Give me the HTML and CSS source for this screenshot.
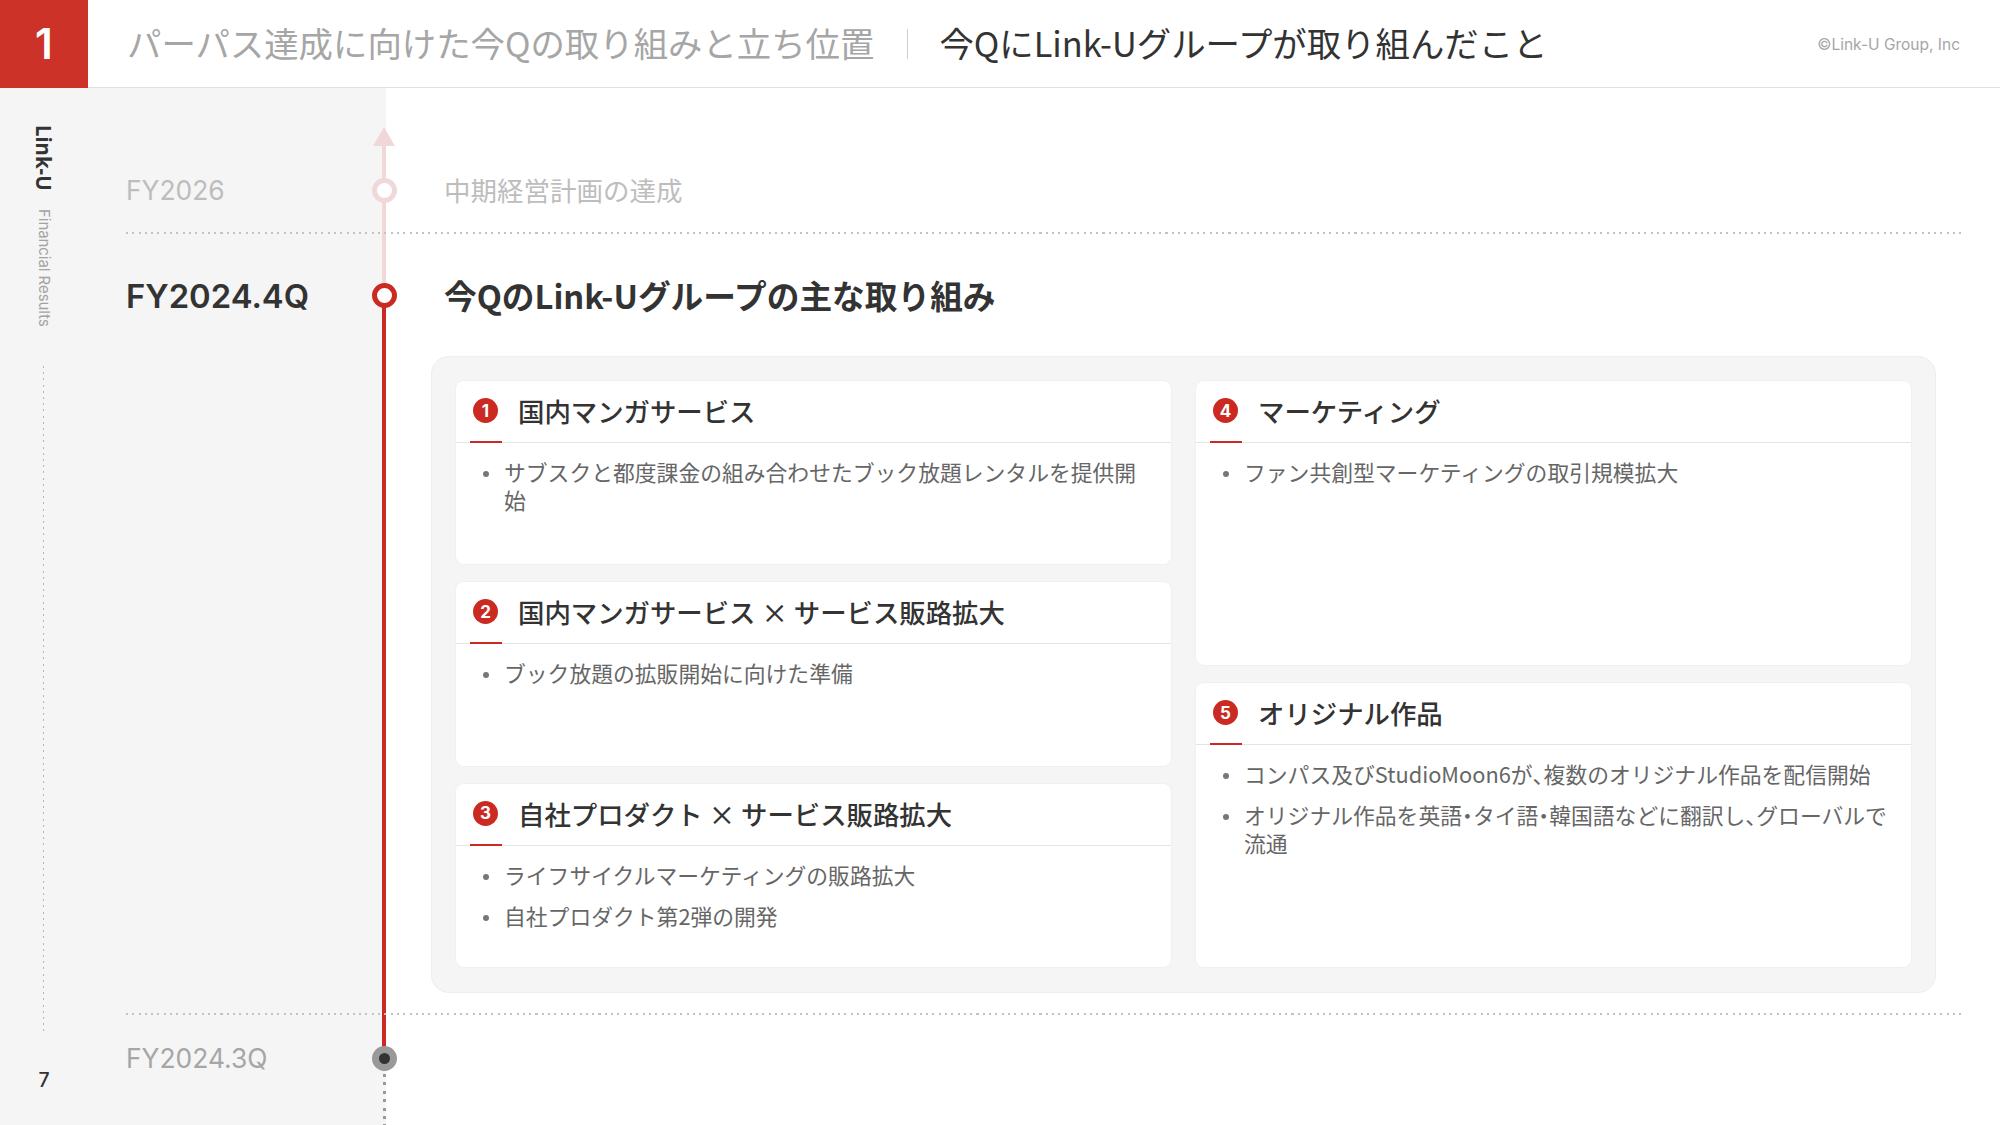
FILE: index.html
```html
<!DOCTYPE html>
<html lang="ja">
<head>
<meta charset="utf-8">
<title>今QにLink-Uグループが取り組んだこと</title>
<link rel="stylesheet" href="styles.css">
</head>
<body>
<div class="slide">
  <header class="top">
    <div class="chapter">1</div>
    <div class="crumb">パーパス達成に向けた今Qの取り組みと立ち位置</div>
    <div class="sep"></div>
    <h1 class="title">今QにLink-Uグループが取り組んだこと</h1>
    <div class="copy">©Link-U Group, Inc</div>
  </header>
  <div class="main">
    <aside class="rail">
      <div class="brand">Link-U</div>
      <div class="sub">Financial Results</div>
      <div class="rail-dots"></div>
      <div class="page">7</div>
    </aside>
    <div class="timeline">
      <div class="line-faded"></div>
      <div class="arrow"></div>
      <div class="line-red"></div>
      <div class="line-dots"></div>

      <section class="row row-future">
        <div class="year">FY2026</div>
        <div class="marker"><span class="dot dot-future"></span></div>
        <div class="row-text">中期経営計画の達成</div>
      </section>

      <section class="row-now">
        <div class="row row-current">
          <div class="year">FY2024.4Q</div>
          <div class="marker"><span class="dot dot-current"></span></div>
          <h2 class="row-text">今QのLink-Uグループの主な取り組み</h2>
        </div>
        <div class="panel">
          <div class="col">
            <article class="card">
              <div class="card-head"><span class="num">1</span><h3>国内マンガサービス</h3></div>
              <ul><li>サブスクと都度課金の組み合わせたブック放題レンタルを提供開始</li></ul>
            </article>
            <article class="card">
              <div class="card-head"><span class="num">2</span><h3>国内マンガサービス × サービス販路拡大</h3></div>
              <ul><li>ブック放題の拡販開始に向けた準備</li></ul>
            </article>
            <article class="card">
              <div class="card-head"><span class="num">3</span><h3>自社プロダクト × サービス販路拡大</h3></div>
              <ul><li>ライフサイクルマーケティングの販路拡大</li><li>自社プロダクト第2弾の開発</li></ul>
            </article>
          </div>
          <div class="col">
            <article class="card card-m">
              <div class="card-head"><span class="num">4</span><h3>マーケティング</h3></div>
              <ul><li>ファン共創型マーケティングの取引規模拡大</li></ul>
            </article>
            <article class="card card-o">
              <div class="card-head"><span class="num">5</span><h3>オリジナル作品</h3></div>
              <ul><li>コンパス及びStudioMoon6が<span class="tight">、</span>複数のオリジナル作品を配信開始</li><li>オリジナル作品を英語<span class="tight">・</span>タイ語<span class="tight">・</span>韓国語などに翻訳し<span class="tight">、</span>グローバルで<span>流通</span></li></ul>
            </article>
          </div>
        </div>
      </section>

      <section class="row row-past">
        <div class="year">FY2024.3Q</div>
        <div class="marker"><span class="dot dot-past"></span></div>
      </section>
    </div>
  </div>
</div>
</body>
</html>
```
FILE: styles.css
```css
* { box-sizing: border-box; }
html, body { margin: 0; padding: 0; }
body {
  width: 2000px; height: 1125px; overflow: hidden; background: #fff; color: #333;
  font-family: "Noto Sans CJK JP", "Noto Sans", sans-serif;
}
h1, h2, h3, ul { margin: 0; padding: 0; }
.tight { display: inline-block; font-feature-settings: "palt"; }
.slide { display: flex; flex-direction: column; width: 2000px; height: 1125px; }

.top { display: flex; align-items: center; height: 88px; flex: none; border-bottom: 1px solid #e0e0e0; }
.chapter {
  width: 88px; height: 88px; flex: none; background: #cd3229; color: #fff;
  display: flex; align-items: center; justify-content: center;
  font: 600 42px "Inter", sans-serif;
}
.crumb { margin-left: 39px; font-size: 34.4px; color: #a6a6a6; line-height: 84px; height: 88px; }
.sep { width: 1px; height: 30px; background: #cfcfcf; margin: 0 31px 0 33px; }
.title { font-size: 34.4px; font-weight: 400; color: #333; line-height: 84px; height: 88px; }
.copy { margin-left: auto; margin-right: 40px; margin-top: 2px; font: 400 15.5px "Inter", sans-serif; color: #a6a6a6; }

.main {
  display: flex; flex: 1; min-height: 0;
  background: linear-gradient(to right, #f5f5f5 386px, #fff 386px);
}
.rail { width: 88px; flex: none; display: flex; flex-direction: column; align-items: center; padding-top: 37px; }
.brand { writing-mode: vertical-rl; font: 700 20.5px/24px "Noto Sans", sans-serif; color: #333; }
.sub { writing-mode: vertical-rl; margin-top: 18px; font: 400 14.9px/18px "Inter", sans-serif; color: #a3a3a3; }
.rail-dots {
  margin: 40px 2px 0 0; height: 665px; width: 1px; flex: none;
  background: repeating-linear-gradient(to bottom, #b5b5b5 0 2px, transparent 2px 6.2px);
}
.page { margin-top: 37px; font: 500 19.5px "Inter", sans-serif; color: #333; }

.timeline { position: relative; flex: 1; padding: 0 38px; }
.line-faded { position: absolute; left: 294px; top: 50px; width: 4px; height: 160px; background: #f1d8d8; }
.arrow {
  position: absolute; left: 285px; top: 39px; width: 22px; height: 19px;
  background: #f1d8d8; clip-path: polygon(50% 0, 100% 100%, 0 100%);
}
.line-red { position: absolute; left: 294px; top: 210px; width: 4px; height: 760px; background: #cb2a22; }
.line-dots {
  position: absolute; left: 295px; top: 986px; width: 3px; height: 51px;
  background: repeating-linear-gradient(to bottom, #999 0 3px, transparent 3px 8.4px);
}

.row { position: relative; display: flex; align-items: center; }
.year { width: 231px; flex: none; font-family: "Inter", sans-serif; font-size: 26.4px; }
.marker { width: 65px; flex: none; display: flex; justify-content: center; margin-left: -5px; position: relative; }
.dot { display: block; width: 25px; height: 25px; border-radius: 50%; background: #fff; }
.row-text { margin-left: 27px; margin-bottom: 2px; }

.row-future::after, .row-now::after {
  content: ""; position: absolute; left: 0; right: 0; bottom: 0; height: 2px;
  background: repeating-linear-gradient(to right, #c2c2c2 0 2px, transparent 2px 6.3px);
}
.row-future { height: 146px; padding-top: 58px; }
.row-future .year { color: #bdbdbd; }
.row-future .row-text { font-size: 26.5px; color: #bdbdbd; }
.dot-future { border: 5px solid #f1d8d8; }

.row-now { position: relative; padding-bottom: 22px; }
.row-current { height: 122px; padding-top: 1px; }
.row-current .year { font-weight: 600; font-size: 32.8px; color: #333; }
.row-current .row-text { font-size: 32.7px; font-weight: 600; color: #333; }
.dot-current { border: 5px solid #cb2a22; }

.panel {
  display: grid; grid-template-columns: 1fr 1fr; gap: 25px;
  margin-left: 305px; margin-right: 26px; padding: 24px 24px 25px;
  height: 637px; background: #f5f5f5; border: 1px solid #eee; border-radius: 18px;
}
.col { display: flex; flex-direction: column; gap: 18px; min-height: 0; }
.card { flex: 1; background: #fff; border-radius: 8px; box-shadow: 0 0 0 1px #f0f0f0; min-height: 0; }
.card-m { flex: 0 0 284px; }
.card-o { flex: 1; }
.card-head {
  position: relative; display: flex; align-items: center; height: 62px; padding-left: 17px;
  border-bottom: 1px solid #e4e4e4;
}
.card-head::after {
  content: ""; position: absolute; left: 14px; bottom: -1px; width: 32px; height: 2px; background: #cb2a22;
}
.num {
  width: 25px; height: 25px; border-radius: 50%; background: #cb2a22; color: #fff; flex: none;
  display: flex; align-items: center; justify-content: center; font: 700 17px "Inter", sans-serif;
  margin-bottom: 2px;
}
.card-head h3 { margin: 0 0 2px 20px; font-size: 26.4px; font-weight: 500; color: #333; }
ul { list-style: none; padding: 15px 20px 0 48px; }
li { position: relative; font-size: 21.8px; line-height: 28px; color: #666; margin-bottom: 13px; font-weight: 400; }
li::before {
  content: ""; position: absolute; left: -21px; top: 13px; width: 6px; height: 6px; border-radius: 50%; background: #777;
}

.row-past { height: 88px; padding-bottom: 2px; }
.row-past .year { color: #a6a6a6; }
.dot-past { background: #333; border: 7px solid #999; }
```
